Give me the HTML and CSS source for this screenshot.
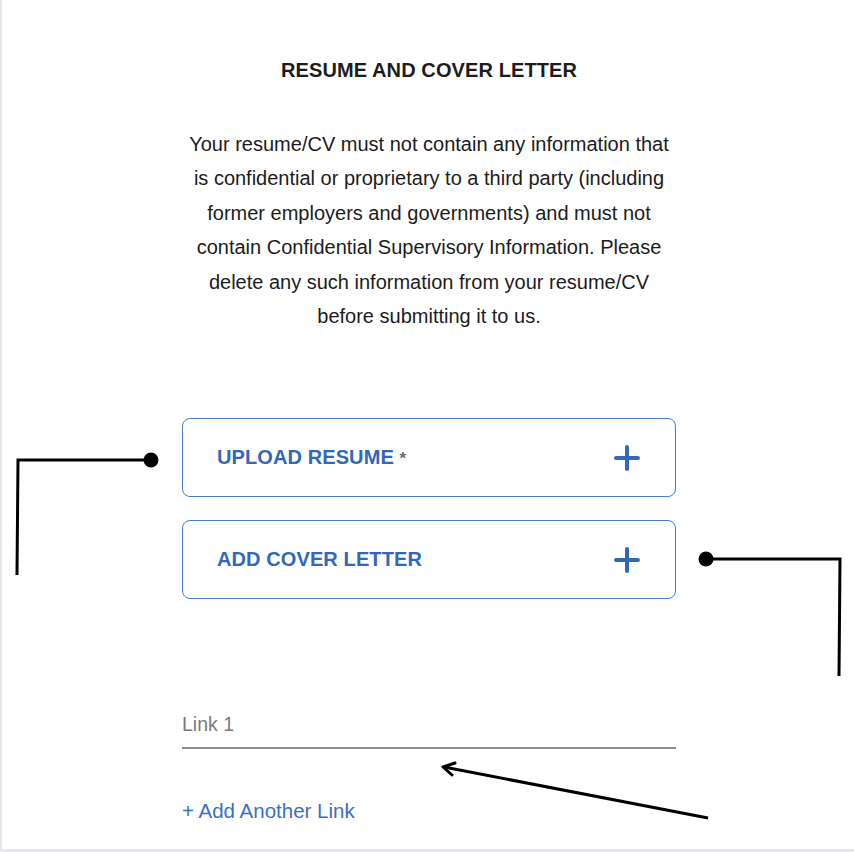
FILE: index.html
```html
<!DOCTYPE html>
<html>
<head>
<meta charset="utf-8">
<link rel="stylesheet" href="styles.css">
</head>
<body>
<div class="page">
  <main class="content">
    <h1 class="title">RESUME AND COVER LETTER</h1>
    <p class="notice">Your resume/CV must not contain any information that is confidential or proprietary to a third party (including former employers and governments) and must not contain Confidential Supervisory Information. Please delete any such information from your resume/CV before submitting it to us.</p>
    <div class="uploads">
      <div class="upload-btn"><span class="upload-label">UPLOAD RESUME <span class="req">*</span></span>
        <svg class="plus" width="26" height="26" viewBox="0 0 26 26"><path d="M13 2V24M2 13H24" stroke="#3367b8" stroke-width="4" stroke-linecap="round"/></svg>
      </div>
      <div class="upload-btn"><span class="upload-label">ADD COVER LETTER</span>
        <svg class="plus" width="26" height="26" viewBox="0 0 26 26"><path d="M13 2V24M2 13H24" stroke="#3367b8" stroke-width="4" stroke-linecap="round"/></svg>
      </div>
    </div>
    <div class="link-field"><span class="placeholder">Link 1</span></div>
    <a class="add-link">+ Add Another Link</a>
  </main>
  <svg class="annotations" width="854" height="852" viewBox="0 0 854 852">
    <g stroke="#000" stroke-width="3" fill="none" stroke-linecap="butt">
      <path d="M17 575L18 460H151"/>
      <path d="M706 559H840L839 676"/>
      <path d="M708 818L444 767"/>
      <path d="M455 763L443 767L452 775" stroke-linejoin="round" stroke-linecap="round"/>
    </g>
    <circle cx="151" cy="460" r="7.5" fill="#000"/>
    <circle cx="706" cy="559" r="7.5" fill="#000"/>
  </svg>
</div>
</body>
</html>
```
FILE: styles.css
```css
html, body {
  margin: 0;
  padding: 0;
  background: #fff;
}
.page {
  position: relative;
  width: 852px;
  height: 849px;
  border-left: 2px solid #e6e6ec;
  border-bottom: 3px solid #e6e6ec;
  font-family: "Liberation Sans", Arial, sans-serif;
  overflow: hidden;
}
.content {
  width: 494px;
  margin: 0 auto;
  padding-top: 58px;
  display: flex;
  flex-direction: column;
  transform: translateX(1px);
}
.title {
  margin: 0;
  font-size: 20px;
  font-weight: bold;
  text-align: center;
  color: #1c1c1e;
  line-height: 24px;
  letter-spacing: 0.1px;
}
.notice {
  margin: 45px auto 0;
  width: 490px;
  font-size: 20px;
  line-height: 34.4px;
  text-align: center;
  color: #1c1c1e;
}
.uploads {
  margin-top: 85px;
  display: flex;
  flex-direction: column;
  gap: 23px;
}
.upload-btn {
  height: 77px;
  border: 1px solid #4a7bc8;
  border-radius: 8px;
  display: flex;
  align-items: center;
  justify-content: space-between;
  padding: 0 35px 0 34px;
}
.upload-label {
  font-size: 20px;
  font-weight: bold;
  color: #3367b8;
  letter-spacing: 0.1px;
}
.req {
  color: #6b6b6b;
  font-size: 17px;
}
.link-field {
  margin-top: 113px;
  height: 35px;
  border-bottom: 2px solid #8e8e8e;
  display: flex;
  align-items: flex-start;
}
.placeholder {
  font-size: 19.5px;
  color: #7a7a7a;
  line-height: 24px;
}
.add-link {
  margin-top: 50px;
  font-size: 20.5px;
  color: #3d6fc0;
  line-height: 24px;
}
.annotations {
  position: absolute;
  left: -2px;
  top: 0;
  pointer-events: none;
}
```
